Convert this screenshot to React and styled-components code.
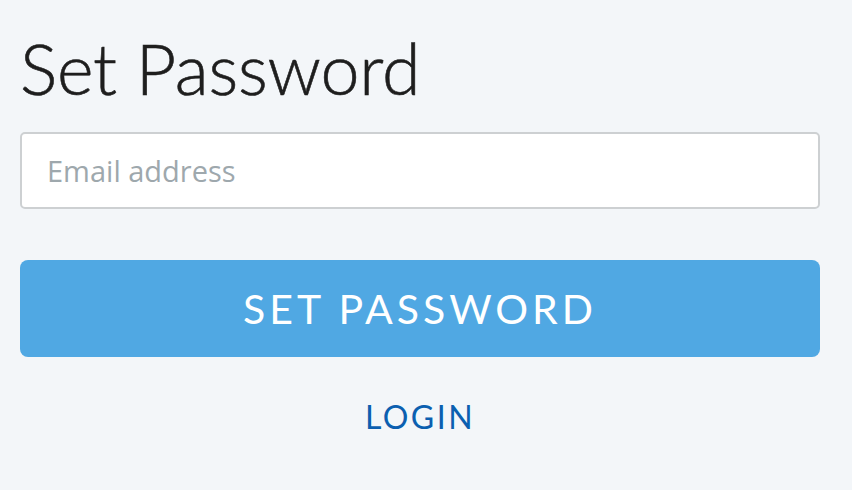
import React from "react";
import styled, { createGlobalStyle } from "styled-components";

const Global = createGlobalStyle`
  html, body { margin: 0; padding: 0; background: #f3f6f9; }
  body { font-family: "Lato", "Open Sans", sans-serif; }
`;

const Page = styled.div`
  width: 852px;
  height: 490px;
  box-sizing: border-box;
  padding: 28px 32px 0 20px;
  display: flex;
  flex-direction: column;
  background: #f3f6f9;
`;

const Title = styled.h1`
  margin: 0;
  font-family: "Lato", sans-serif;
  font-weight: 300;
  font-size: 70px;
  line-height: 80px;
  color: #1e1e1e;
  letter-spacing: -0.2px;
  -webkit-text-stroke: 0.6px #1e1e1e;
`;

const Input = styled.input`
  margin-top: 24px;
  height: 77px;
  box-sizing: border-box;
  border: 2px solid #cdd0d2;
  border-radius: 5px;
  background: #fff;
  padding: 0 25px;
  font-family: "Open Sans", sans-serif;
  font-size: 29px;
  color: #333;
  outline: none;
  &::placeholder { color: #9ea8ad; }
`;

const Button = styled.button`
  margin-top: 51px;
  height: 97px;
  border: none;
  border-radius: 8px;
  background: #50a8e3;
  color: #fff;
  font-family: "Lato", sans-serif;
  font-weight: 400;
  font-size: 41px;
  letter-spacing: 4px;
  text-transform: uppercase;
  cursor: pointer;
`;

const LinkRow = styled.div`
  margin-top: 40px;
  display: flex;
  justify-content: center;
`;

const Login = styled.a`
  font-family: "Lato", sans-serif;
  font-size: 32px;
  letter-spacing: 2.5px;
  color: #0b5fb0;
  text-decoration: none;
`;

export default function App() {
  return (
    <>
      <Global />
      <Page>
        <Title>Set Password</Title>
        <Input type="email" placeholder="Email address" />
        <Button>Set Password</Button>
        <LinkRow>
          <Login href="#">LOGIN</Login>
        </LinkRow>
      </Page>
    </>
  );
}
